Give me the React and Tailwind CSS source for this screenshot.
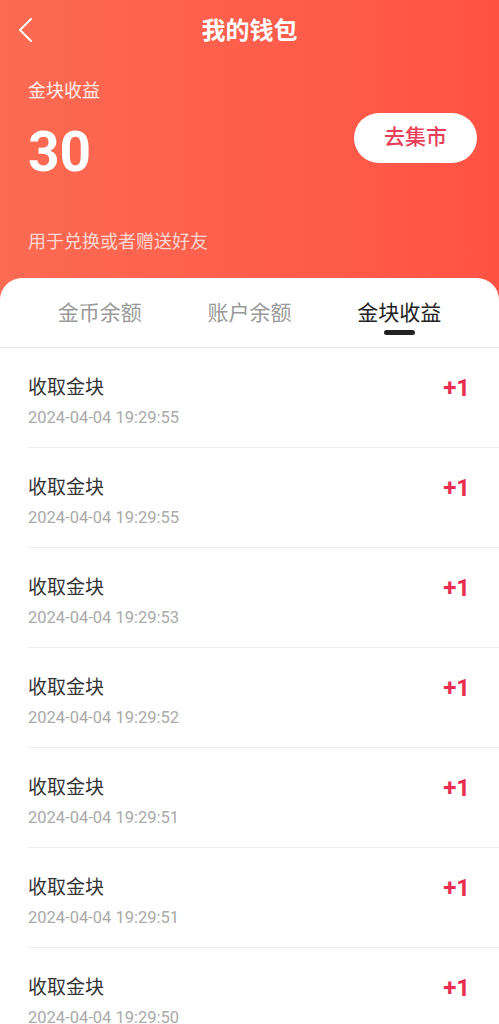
import React from "react";

const records = [
  "2024-04-04 19:29:55",
  "2024-04-04 19:29:55",
  "2024-04-04 19:29:53",
  "2024-04-04 19:29:52",
  "2024-04-04 19:29:51",
  "2024-04-04 19:29:51",
  "2024-04-04 19:29:50",
];

const tabs = ["金币余额", "账户余额", "金块收益"];

const App = () => {
  return (
    <div className="min-h-screen bg-gradient-to-r from-[#fc6a52] to-[#ff5245] font-['Roboto','Noto_Sans_CJK_SC',sans-serif]">
      <div className="relative flex h-[62px] items-center justify-center">
        <button className="absolute left-[17px] top-[17px]">
          <svg width="17" height="26" viewBox="0 0 17 26" fill="none">
            <path d="M14 2 L3 13 L14 24" stroke="white" strokeWidth="2" strokeLinecap="round" strokeLinejoin="round" />
          </svg>
        </button>
        <h1 className="text-[24px] font-bold leading-[30px] text-white">我的钱包</h1>
      </div>

      <div className="pl-[28px] pr-[22px] pb-[24px]">
        <p className="mt-[17px] text-[18px] leading-[24px] text-white/90">金块收益</p>
        <div className="flex items-start justify-between">
          <p className="mt-[17px] text-[55px] font-bold leading-[64px] text-white">30</p>
          <button className="mt-[10px] flex h-[50px] w-[123px] items-center justify-center rounded-full bg-white text-[21px] font-medium text-[#e8405a]">
            去集市
          </button>
        </div>
        <p className="mt-[46px] text-[18px] leading-[24px] text-white/75">用于兑换或者赠送好友</p>
      </div>

      <div className="rounded-t-[22px] bg-white">
        <div className="grid grid-cols-3 border-b border-[#e8e8e8] px-[25px] pt-[21px] pb-[12px]">
          {tabs.map((tab, i) => (
            <div key={tab} className="flex flex-col items-center">
              <span
                className={
                  i === 2
                    ? "text-[21px] leading-[28px] text-[#222]"
                    : "text-[21px] leading-[28px] text-[#999]"
                }
              >
                {tab}
              </span>
              <div
                className={
                  i === 2
                    ? "mt-[3px] h-[5px] w-[31px] rounded-full bg-[#222]"
                    : "mt-[3px] h-[5px] w-[31px]"
                }
              />
            </div>
          ))}
        </div>

        <div>
          {records.map((time, i) => (
            <div key={i} className="ml-[28px] flex h-[100px] items-start justify-between border-b border-[#ececec] pr-[29px] pt-[28px]">
              <div>
                <p className="text-[19px] leading-[24px] text-[#333]">收取金块</p>
                <p className="mt-[8px] text-[16.5px] leading-[20px] text-[#aaaaaa]">{time}</p>
              </div>
              <span className="text-[24px] font-bold leading-[24px] text-[#eb2d52]">+1</span>
            </div>
          ))}
        </div>
      </div>
    </div>
  );
};

export default App;
